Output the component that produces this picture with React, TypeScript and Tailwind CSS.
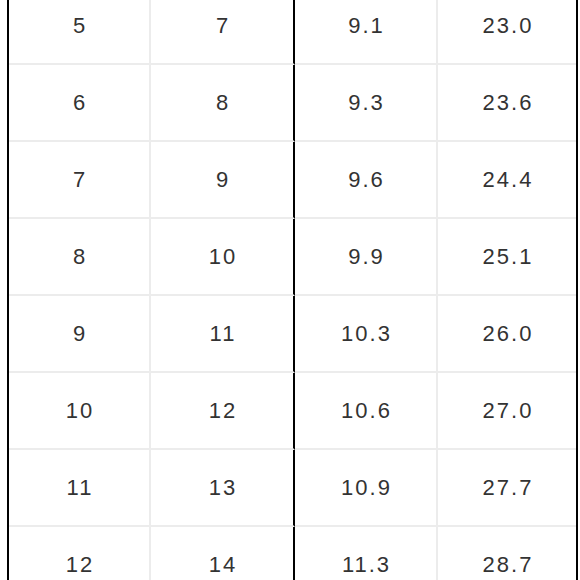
import React from 'react';

const ROWS: [string, string, string, string][] = [
  ['5', '7', '9.1', '23.0'],
  ['6', '8', '9.3', '23.6'],
  ['7', '9', '9.6', '24.4'],
  ['8', '10', '9.9', '25.1'],
  ['9', '11', '10.3', '26.0'],
  ['10', '12', '10.6', '27.0'],
  ['11', '13', '10.9', '27.7'],
  ['12', '14', '11.3', '28.7'],
];

const cell = 'h-[77px] flex items-center justify-center pl-[2px] border-b-2 border-[#ececec]';

export default function App() {
  return (
    <div className="w-[580px] h-[580px] overflow-hidden bg-white">
      <div
        className="-mt-[12px] ml-[7px] w-[571px] border-x-2 border-black grid grid-cols-[142px_144px_143px_1fr] text-[22px] tracking-[2px] text-[#333]"
        style={{ fontFamily: '"Liberation Sans", Arial, sans-serif' }}
      >
        {ROWS.map((r, i) => (
          <React.Fragment key={i}>
            <div className={`${cell} border-r-2 border-r-[#ececec]`}>{r[0]}</div>
            <div className={`${cell} border-r-2 border-r-black`}>{r[1]}</div>
            <div className={`${cell} border-r-2 border-r-[#ececec]`}>{r[2]}</div>
            <div className={cell}>{r[3]}</div>
          </React.Fragment>
        ))}
      </div>
    </div>
  );
}
